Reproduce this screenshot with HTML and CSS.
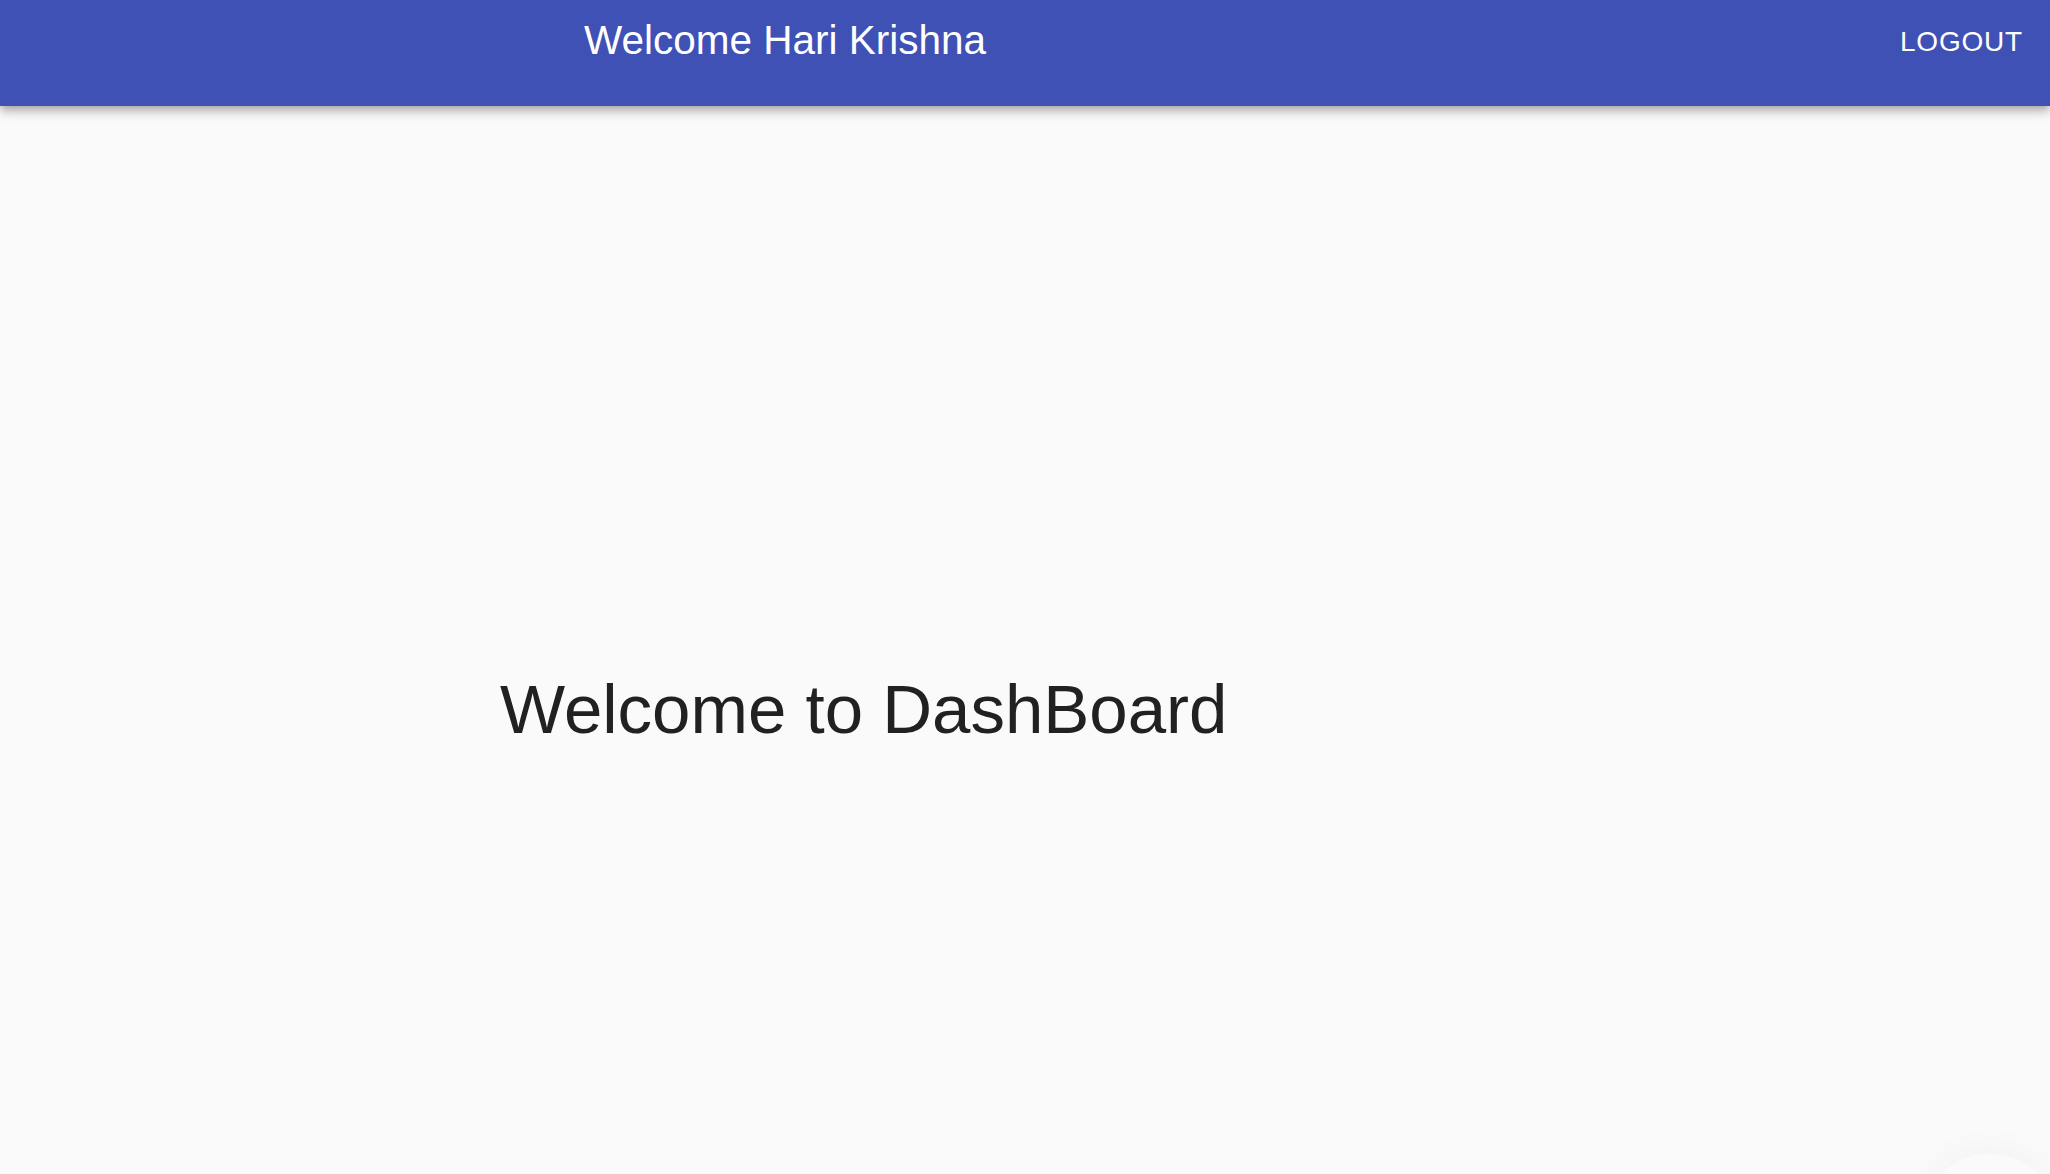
FILE: index.html
```html
<!DOCTYPE html>
<html lang="en">
<head>
<meta charset="utf-8">
<title>DashBoard</title>
<link rel="stylesheet" href="styles.css">
</head>
<body>
<header class="app-bar">
  <div class="app-title">Welcome Hari Krishna</div>
  <button class="logout-btn" type="button">LOGOUT</button>
</header>
<main class="content">
  <h1 class="dash-heading">Welcome to DashBoard</h1>
</main>
<div class="corner-fab"></div>
</body>
</html>
```

FILE: styles.css
```css
html, body {
  margin: 0;
  padding: 0;
  height: 100%;
  overflow: hidden;
}

body {
  background: #fafafa;
  font-family: "Liberation Sans", Arial, Helvetica, sans-serif;
  color: #212121;
}

.app-bar {
  position: relative;
  z-index: 2;
  display: flex;
  align-items: flex-start;
  justify-content: space-between;
  height: 106px;
  box-sizing: border-box;
  padding: 0 27px 0 584px;
  background: #3f51b5;
  color: #ffffff;
  box-shadow: 0 3px 7px -2px rgba(0, 0, 0, 0.2),
              0 7px 8px 0 rgba(0, 0, 0, 0.14),
              0 2px 16px 0 rgba(0, 0, 0, 0.12);
}

.app-title {
  margin-top: 20px;
  font-size: 40.5px;
  line-height: 40px;
  font-weight: 400;
}

.logout-btn {
  margin-top: 28px;
  padding: 0;
  border: 0;
  background: transparent;
  color: #ffffff;
  font-family: inherit;
  font-size: 28px;
  line-height: 28px;
  letter-spacing: 0.8px;
  font-weight: 400;
  cursor: pointer;
}

.content {
  padding: 569px 0 0 500px;
}

.dash-heading {
  margin: 0;
  font-size: 69px;
  line-height: 69px;
  font-weight: 400;
  color: #212121;
}

.corner-fab {
  position: fixed;
  right: -10px;
  bottom: -120px;
  width: 140px;
  height: 140px;
  border-radius: 50%;
  background: #fafafa;
  box-shadow: 0 -4px 36px rgba(0, 0, 0, 0.035);
}
```
